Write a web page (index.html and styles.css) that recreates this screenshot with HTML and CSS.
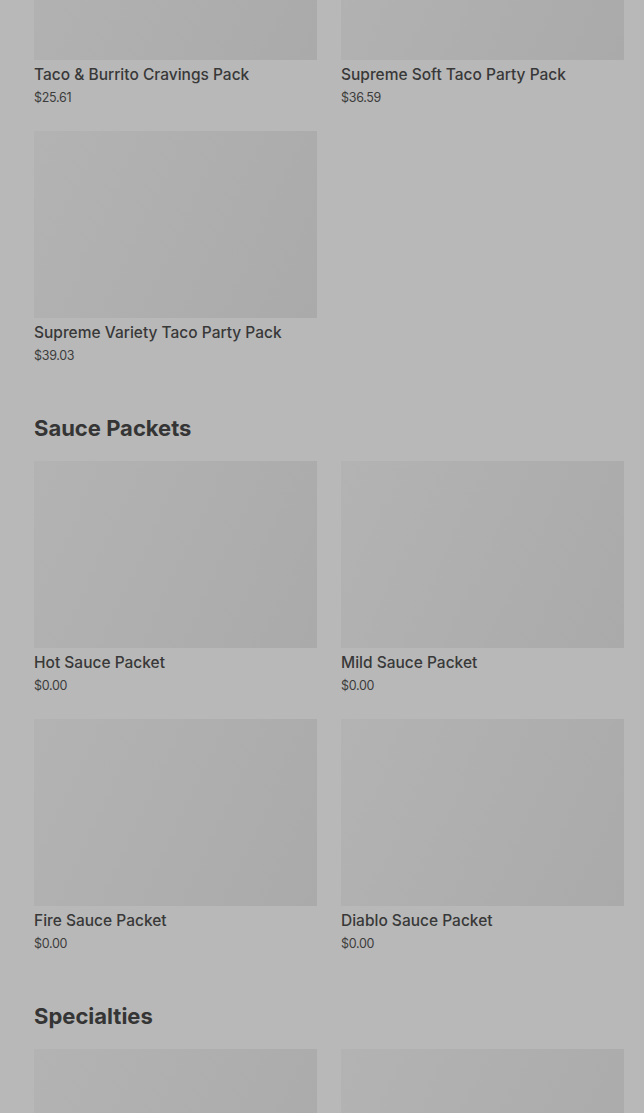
FILE: index.html
```html
<!DOCTYPE html>
<html>
<head>
<meta charset="utf-8">
<link rel="stylesheet" href="styles.css">
</head>
<body>
<main class="menu">
  <section class="section first">
    <div class="grid">
      <div class="card"><div class="thumb"></div><div class="name">Taco &amp; Burrito Cravings Pack</div><div class="price">$25.61</div></div>
      <div class="card"><div class="thumb"></div><div class="name">Supreme Soft Taco Party Pack</div><div class="price">$36.59</div></div>
      <div class="card"><div class="thumb"></div><div class="name">Supreme Variety Taco Party Pack</div><div class="price">$39.03</div></div>
    </div>
  </section>
  <section class="section">
    <h2 class="heading">Sauce Packets</h2>
    <div class="grid">
      <div class="card"><div class="thumb"></div><div class="name">Hot Sauce Packet</div><div class="price">$0.00</div></div>
      <div class="card"><div class="thumb"></div><div class="name">Mild Sauce Packet</div><div class="price">$0.00</div></div>
      <div class="card"><div class="thumb"></div><div class="name">Fire Sauce Packet</div><div class="price">$0.00</div></div>
      <div class="card"><div class="thumb"></div><div class="name">Diablo Sauce Packet</div><div class="price">$0.00</div></div>
    </div>
  </section>
  <section class="section">
    <h2 class="heading">Specialties</h2>
    <div class="grid">
      <div class="card"><div class="thumb"></div></div>
      <div class="card"><div class="thumb"></div></div>
    </div>
  </section>
</main>
</body>
</html>
```
FILE: styles.css
```css
html, body {
  margin: 0;
  padding: 0;
  background: #b8b8b8;
  overflow: hidden;
}
body {
  font-family: Inter, "Noto Sans", "Liberation Sans", sans-serif;
  color: #333333;
  height: 1113px;
}
.menu {
  padding: 0 20px 0 34px;
  margin-top: -127px;
}
.section {
  margin-top: 49px;
}
.section.first {
  margin-top: 0;
}
.heading {
  margin: 0 0 19px 0;
  font-size: 22px;
  line-height: 28px;
  font-weight: 700;
  letter-spacing: 0;
  color: #353535;
}
.grid {
  display: grid;
  grid-template-columns: 283px 283px;
  column-gap: 24px;
  row-gap: 24px;
}
.card {
  display: flex;
  flex-direction: column;
}
.thumb {
  height: 187px;
  background: linear-gradient(115deg, #b3b3b3 0%, #afafaf 45%, #aaaaaa 100%);
}
.name {
  margin-top: 5px;
  font-size: 15.5px;
  line-height: 20px;
  font-weight: 500;
  color: #383838;
  white-space: nowrap;
}
.price {
  margin-top: 4px;
  font-size: 12.5px;
  line-height: 18px;
  font-weight: 400;
  color: #3c3c3c;
  letter-spacing: -0.3px;
}
```
